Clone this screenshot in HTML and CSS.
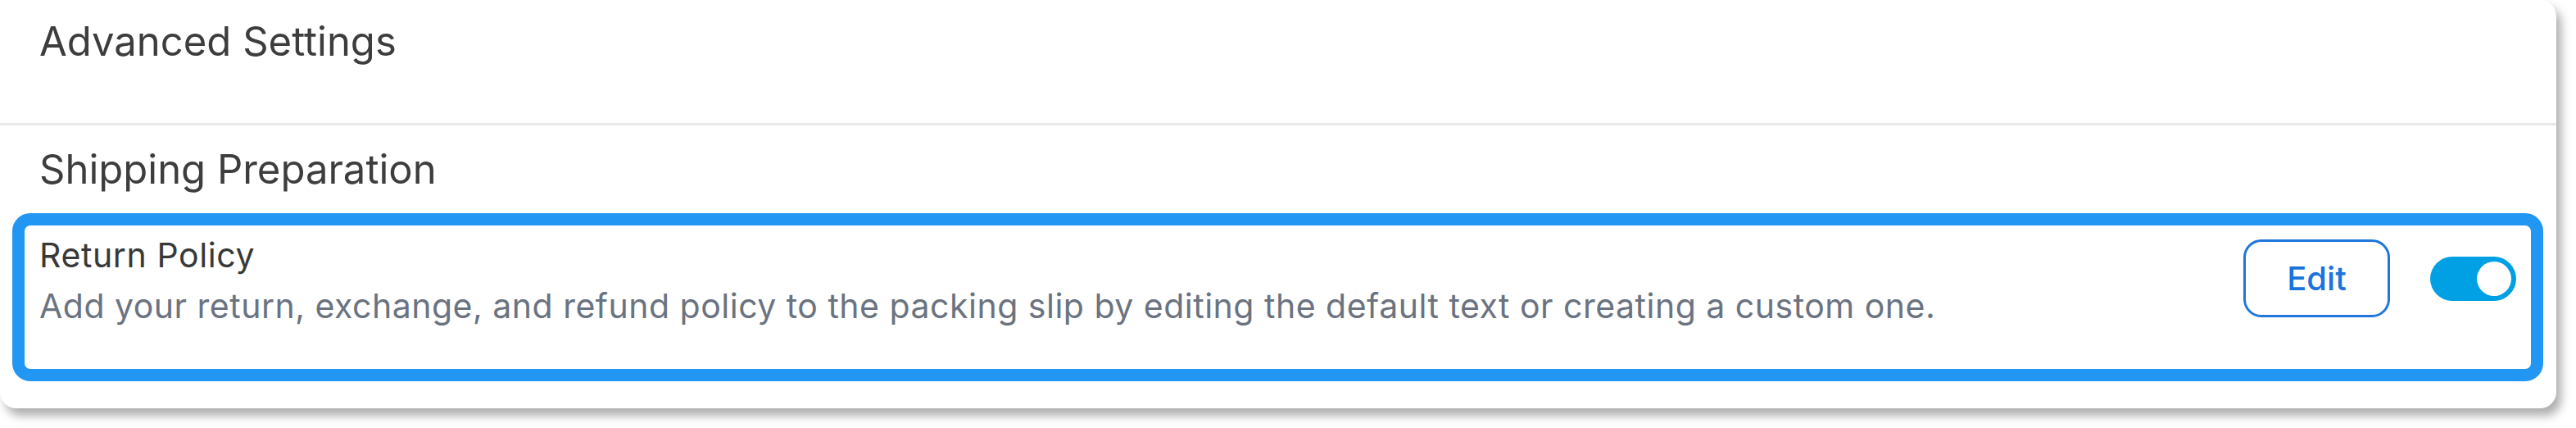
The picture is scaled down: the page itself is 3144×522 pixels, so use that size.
FILE: index.html
```html
<!DOCTYPE html>
<html lang="en">
<head>
<meta charset="utf-8">
<title>Advanced Settings</title>
<link rel="stylesheet" href="styles.css">
</head>
<body>
<div class="card">
  <section class="block block-top">
    <h2 class="heading">Advanced Settings</h2>
  </section>
  <section class="block block-shipping">
    <h2 class="heading">Shipping Preparation</h2>
    <div class="row highlighted">
      <div class="row-text">
        <div class="row-title">Return Policy</div>
        <p class="row-desc">Add your return, exchange, and refund policy to the packing slip by editing the default text or creating a custom one.</p>
      </div>
      <div class="row-actions">
        <button class="btn-edit" type="button">Edit</button>
        <span class="toggle on"><span class="knob"></span></span>
      </div>
    </div>
  </section>
</div>
</body>
</html>
```
FILE: styles.css
```css
html, body {
  margin: 0;
  padding: 0;
  background: #ffffff;
}

body {
  width: 3144px;
  height: 522px;
  overflow: hidden;
  font-family: Inter, "Noto Sans", sans-serif;
}

.card {
  width: 3120px;
  height: 498px;
  background: #ffffff;
  border-radius: 20px;
  box-shadow: 6px 9px 12px rgba(0, 0, 0, 0.32);
  overflow: hidden;
  box-sizing: border-box;
}

.block {
  padding: 0 48px;
}

.block-top {
  padding-top: 21px;
  box-sizing: border-box;
  border-bottom: 3px solid #e9e9e9;
  height: 153px;
}

.heading {
  margin: 0;
  font-family: Inter, sans-serif;
  font-weight: 400;
  font-size: 49px;
  line-height: 59px;
  color: #3d3d3d;
}

.block-shipping {
  padding: 24px 16px 0 15px;
}

.block-shipping .heading {
  padding-left: 33px;
}

.row {
  margin-top: 24px;
  display: flex;
  align-items: center;
  border: 15px solid #2196f3;
  border-radius: 22px;
  padding: 12px 18px 53px 18px;
}

.row-text {
  flex: 1;
  min-width: 0;
}

.row-title {
  font-family: Inter, sans-serif;
  font-weight: 400;
  font-size: 41px;
  line-height: 48px;
  letter-spacing: 0.6px;
  color: #383838;
}

.row-desc {
  margin: 14px 0 0;
  font-family: Inter, sans-serif;
  font-size: 41px;
  line-height: 48px;
  letter-spacing: 0.5px;
  color: #6b7380;
}

.row-actions {
  display: flex;
  align-items: center;
  gap: 49px;
}

.btn-edit {
  width: 179px;
  height: 95px;
  box-sizing: border-box;
  border: 3px solid #1f76dc;
  border-radius: 22px;
  background: #ffffff;
  color: #1b74db;
  font-family: Inter, sans-serif;
  font-weight: 500;
  font-size: 40px;
  padding: 0;
  margin-top: -5px;
}

.toggle {
  display: flex;
  align-items: center;
  justify-content: flex-end;
  width: 105px;
  height: 54px;
  box-sizing: border-box;
  padding: 0 6px;
  border-radius: 27px;
  background: #019fe3;
  margin-top: -4px;
}

.knob {
  width: 42px;
  height: 42px;
  border-radius: 50%;
  background: #ffffff;
}
```
